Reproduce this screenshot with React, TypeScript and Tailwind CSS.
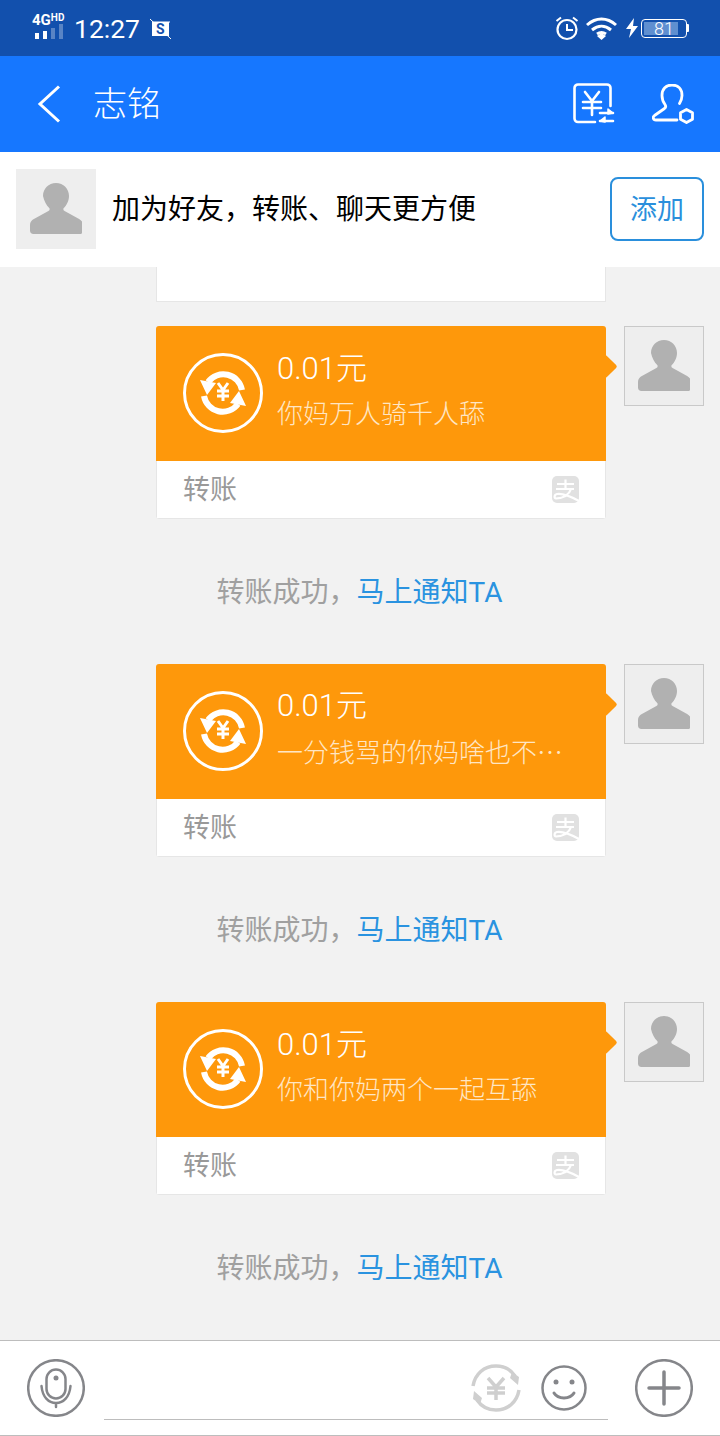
import React from "react";

const font = { fontFamily: '"Roboto", "Noto Sans CJK SC", sans-serif' };

const Avatar = ({ bordered }: { bordered?: boolean }) => (
  <div className={`w-20 h-20 shrink-0 bg-[#eeeeee] flex items-center justify-center ${bordered ? "border border-[#c9c9c9]" : ""}`}>
    <svg width="52" height="52" viewBox="0 0 52 52">
      <path
        d="M26 0c7.500 0 13 5.800 13 13 0 5-2.400 9.300-5.200 12-.8 1-.6 2.200.8 3l14.500 8c2.400 1.300 3.900 3.300 3.900 6v5.500c0 2.200-1.300 3.500-3.500 3.500H3.500C1.300 51 0 49.700 0 47.500V42c0-2.700 1.500-4.700 3.900-6l14.500-8c1.400-.8 1.600-2 .8-3C16.400 22.300 14 18 13 13 13 5.800 18.500 0 26 0Z"
        fill="#b1b1b1"
      />
    </svg>
  </div>
);

const TransferIcon = () => (
  <svg width="80" height="80" viewBox="0 0 80 80" fill="none" stroke="#fff" className="-mt-[1px]">
    <circle cx="40" cy="40" r="38.500" strokeWidth="3" />
    <path d="M59 37A19 19 0 0 0 25 29" strokeWidth="6" />
    <path d="M21 43A19 19 0 0 0 55 51" strokeWidth="6" />
    <path d="M17 27l16 3-9 12z" fill="#fff" stroke="none" />
    <path d="M63 53l-16-3 9-12z" fill="#fff" stroke="none" />
    <path d="M35 30l5 7 5-7M34 38h12M34 43h12M40 37v11" strokeWidth="3" />
  </svg>
);

const AlipayIcon = () => (
  <div className="w-[27px] h-[27px] rounded-[5px] bg-[#e1e1e1] flex items-center justify-center">
    <svg width="27" height="27" viewBox="0 0 27 27" fill="none" stroke="#fff" strokeWidth="2.200">
      <path d="M5 8h17M13.500 3.500V13M4 13h18M19 13c-2 6-7 9-15 9.500-2 0-2-4 1-4.500 6-1 13 2 22 7" />
    </svg>
  </div>
);

const Transfer = ({ note, more }: { note: string; more?: boolean }) => (
  <div>
    <div className="flex items-start pl-[156px] pr-4 gap-[18px]">
      <div className="relative w-[450px]">
        <div className="absolute right-[-8px] top-[32px] w-[17px] h-[17px] rotate-45 bg-[#fe980b] rounded-[2px]" />
        <div className="relative h-[193px] rounded-[3px] overflow-hidden">
          <div className="h-[135px] bg-[#fe980b] flex items-center pl-[27px]">
            <TransferIcon />
            <div className="ml-[14px] w-[292px] -mt-[7px]">
              <p className="text-[31px] leading-[44px] font-light text-white whitespace-nowrap">0.01元</p>
              <p className="mt-[3px] text-[26px] leading-[40px] font-light text-[#ffe6c4] whitespace-nowrap">
                {note}
                {more && <span className="font-['Noto_Sans_CJK_SC']">…</span>}
              </p>
            </div>
          </div>
          <div className="h-[58px] bg-white border-x border-b border-[#e6e6e6] flex items-center justify-between pl-[26px] pr-[26px]">
            <span className="text-[27px] text-[#999999] pt-[2px]">转账</span>
            <AlipayIcon />
          </div>
        </div>
      </div>
      <Avatar bordered />
    </div>
    <div className="h-[145px] flex items-center justify-center text-[28px] pt-[3px] pr-[1px]">
      <span className="text-[#a0a0a0]">转账成功，</span>
      <span className="text-[#2a93e0]">马上通知TA</span>
    </div>
  </div>
);

const StatusBar = () => (
  <div className="h-14 bg-[#1250ad] flex items-center pl-8 pr-[31px] text-white">
    <div className="w-[34px] -mt-[2px]">
      <div className="flex items-start h-[10px] font-bold">
        <span className="text-[15px] leading-[10px]">4G</span>
        <span className="text-[10px] leading-[6px]">HD</span>
      </div>
      <svg width="32" height="15" viewBox="0 0 32 15" className="-mt-[1px]" fill="#fff">
        <rect x="3" y="9" width="4" height="6" />
        <rect x="11" y="7" width="4" height="8" />
        <rect x="19" y="4" width="4" height="11" fillOpacity=".3" />
        <rect x="27" y="0" width="4" height="15" fillOpacity=".3" />
      </svg>
    </div>
    <span className="ml-[8px] mt-[3px] text-[26.5px] leading-none">12:27</span>
    <svg width="24" height="24" viewBox="0 0 24 24" className="ml-[9px] mt-[1px]">
      <path d="M1 2l21 20M3 5h18" stroke="#fff" strokeWidth="1" />
      <rect x="3" y="5" width="17" height="14" fill="#fff" />
      <text x="7" y="17" fontSize="14" fontWeight="700" fill="#1250ad">S</text>
    </svg>
    <div className="flex-1" />
    <svg width="24" height="26" viewBox="0 0 24 26" fill="none" stroke="#fff">
      <circle cx="12" cy="14.500" r="9.500" strokeWidth="2.200" />
      <path d="M12 9v6h6" strokeWidth="2" />
      <path d="M1.500 6L6 2.500M22.500 6L18 2.500" strokeWidth="2" />
    </svg>
    <svg width="33" height="24" viewBox="0 0 33 24" className="ml-[6px]" fill="none" stroke="#fff" strokeWidth="3">
      <path d="M2 9c9-8 20-8 29 0M7 14c6-5 13-5 19 0M12 18c3-2 6-2 9 0" />
      <path d="M12 20l4.500-3 4.500 3-4.500 4z" fill="#fff" stroke="none" />
    </svg>
    <svg width="12" height="20" viewBox="0 0 12 20" className="ml-[8px]" fill="#fff">
      <path d="M8 0L0 11h5l-2 9 9-12H7z" />
    </svg>
    <div className="ml-[3px] flex items-center">
      <div className="relative w-[46px] h-[19px] border border-white rounded-[4px] p-[2px]">
        <div className="h-full w-[34px] bg-[#5f8fd0]" />
        <span className="absolute inset-0 pl-[12px] text-[18px] leading-[17px] font-light">81</span>
      </div>
      <div className="w-[2px] h-[8px] bg-white rounded-r-[1px]" />
    </div>
  </div>
);

const Header = () => (
  <div className="h-24 bg-[#1677ff] flex items-center pl-[37px] pr-[26px] text-white">
    <svg width="24" height="38" viewBox="0 0 24 38" fill="none" stroke="#fff" strokeWidth="3">
      <path d="M22 1.500L3 19l19 17.500" />
    </svg>
    <span className="ml-[32px] mt-[1px] text-[34px] font-light">志铭</span>
    <div className="flex-1" />
    <svg width="42" height="42" viewBox="0 0 42 42" fill="none" stroke="#fff" strokeWidth="2.600" strokeLinecap="round" strokeLinejoin="round">
      <path d="M22 39H5a3.500 3.500 0 0 1-3.500-3.500V5A3.500 3.500 0 0 1 5 1.500h29A3.500 3.500 0 0 1 37.500 5v18" />
      <path d="M12 9l7 9 7-9M10 19h18M10 25h18M19 18v14" />
      <path d="M27 30h13M27 38h13" />
      <path d="M35 26l5 4-5 1zM32 34l-5 4 5 1z" fill="#fff" strokeWidth="1.500" />
    </svg>
    <svg width="42" height="40" viewBox="0 0 42 40" className="ml-[37px]" fill="none" stroke="#fff" strokeWidth="2.800" strokeLinecap="round" strokeLinejoin="round">
      <path d="M25 36H4c-3 0-3.500-3-1.500-4.500l10-7c1.500-1.200 1.500-2.500.5-4-2-2.700-3-5.500-3-9C10 5 14 1 20 1s10 4 10 10.500c0 3-1 5.500-2.500 8" />
      <path d="M34.500 25.500l6 3.300v6.400l-6 3.300-6-3.300v-6.400z" />
    </svg>
  </div>
);

const Banner = () => (
  <div className="h-[115px] bg-white flex items-center pl-4 pr-4">
    <div className="-mt-[1px]">
      <Avatar />
    </div>
    <span className="ml-4 text-[28px] text-black flex-1">加为好友，转账、聊天更方便</span>
    <div className="w-[94px] h-16 -mt-[2px] pt-[3px] rounded-lg border-2 border-[#2a8fdc] text-[#2a8fdc] text-[27px] flex items-center justify-center">
      添加
    </div>
  </div>
);

const InputBar = () => (
  <div className="h-24 bg-white border-t border-b border-[#bdbdbd] flex items-center relative pl-[27px]">
    <svg width="58" height="58" viewBox="0 0 58 58" fill="none" stroke="#85868a" strokeWidth="2.500">
      <circle cx="29" cy="29" r="27.800" />
      <rect x="19.500" y="10.500" width="19" height="29" rx="9.500" />
      <circle cx="29" cy="19" r="2.500" fill="#85868a" stroke="none" />
      <path d="M14.500 27c1 11 7 17 14.500 17s13.500-6 14.500-17M29 44v4" strokeLinecap="round" />
    </svg>
    <div className="absolute left-[104px] bottom-[15px] w-[504px] h-[1px] bg-[#bdbdbd]" />
    <div className="flex-1" />
    <svg width="50" height="50" viewBox="0 0 50 50" fill="none" stroke="#cfcfcf" strokeWidth="3.500" className="-mr-[4px]">
      <path d="M2 23C4 11 13 3 25 3c8 0 15 4 19 10M48 27c-2 12-11 20-23 20-8 0-15-4-19-10" />
      <path d="M41 9l7 5-1 8-8-7zM9 41l-7-5 1-8 8 7z" fill="#cfcfcf" stroke="none" />
      <path d="M17 15l8 9 8-9M16 25h18M16 30h18M25 24v13" />
    </svg>
    <svg width="46" height="46" viewBox="0 0 46 46" fill="none" stroke="#85868a" strokeWidth="2.500" className="ml-[24px]" strokeLinecap="round">
      <circle cx="23" cy="23" r="21.500" />
      <circle cx="15" cy="17" r="2.500" fill="#85868a" stroke="none" />
      <circle cx="31" cy="17" r="2.500" fill="#85868a" stroke="none" />
      <path d="M13 28c4 6.500 16 6.500 20 0" strokeWidth="3" />
    </svg>
    <svg width="58" height="58" viewBox="0 0 58 58" fill="none" stroke="#85868a" className="ml-[48px] mr-[27px]">
      <circle cx="29" cy="29" r="27.800" strokeWidth="2.500" />
      <path d="M14 29h30M29 13v32" strokeWidth="3.500" strokeLinecap="round" />
    </svg>
  </div>
);

export default function App() {
  return (
    <div className="w-[720px] h-[1436px] flex flex-col bg-[#f2f2f2] overflow-hidden" style={font}>
      <StatusBar />
      <Header />
      <Banner />
      <div className="flex-1 overflow-hidden">
        <div className="ml-[156px] w-[450px] h-[35px] bg-white border-b border-x border-[#e6e6e6]" />
        <div className="mt-6">
          <Transfer note="你妈万人骑千人舔" />
          <Transfer note="一分钱骂的你妈啥也不" more />
          <Transfer note="你和你妈两个一起互舔" />
        </div>
      </div>
      <InputBar />
    </div>
  );
}
